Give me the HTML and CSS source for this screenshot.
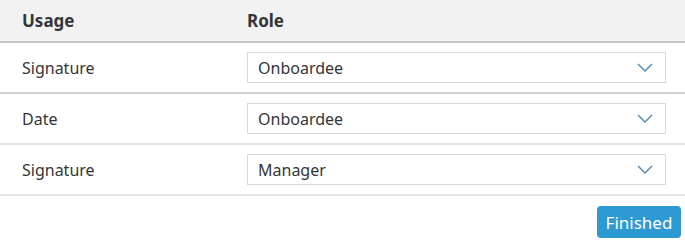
FILE: index.html
```html
<!DOCTYPE html>
<html lang="en">
<head>
    <meta charset="UTF-8">
    <title>Signature Roles</title>
    <link rel="stylesheet" href="styles.css">
</head>
<body>

    <div class="role-table">
        <div class="row head">
            <div class="cell usage">Usage</div>
            <div class="cell">Role</div>
        </div>
        <div class="row first">
            <div class="cell usage">Signature</div>
            <div class="cell">
                <div class="select">
                    <span>Onboardee</span>
                    <svg class="chevron" width="16" height="9" viewBox="0 0 16 9"><path d="M1 1 L8 8 L15 1" fill="none" stroke="#5a8fb8" stroke-width="1.5"/></svg>
                </div>
            </div>
        </div>
        <div class="row">
            <div class="cell usage">Date</div>
            <div class="cell">
                <div class="select">
                    <span>Onboardee</span>
                    <svg class="chevron" width="16" height="9" viewBox="0 0 16 9"><path d="M1 1 L8 8 L15 1" fill="none" stroke="#5a8fb8" stroke-width="1.5"/></svg>
                </div>
            </div>
        </div>
        <div class="row">
            <div class="cell usage">Signature</div>
            <div class="cell">
                <div class="select">
                    <span>Manager</span>
                    <svg class="chevron" width="16" height="9" viewBox="0 0 16 9"><path d="M1 1 L8 8 L15 1" fill="none" stroke="#5a8fb8" stroke-width="1.5"/></svg>
                </div>
            </div>
        </div>
    </div>

    <div class="actions">
        <button class="finish-btn">Finished</button>
    </div>

</body>
</html>
```
FILE: styles.css
```css
body {
    margin: 0;
    font-family: "Noto Sans", sans-serif;
    font-size: 16px;
    color: #32363a;
    background-color: #fff;
}
.row {
    display: grid;
    grid-template-columns: 247px 1fr;
    align-items: center;
    height: 49px;
    border-bottom: 2px solid #e5e5e5;
}
.row.head {
    height: 41px;
    background-color: #f2f2f2;
    border-bottom: 2px solid #c6c6c6;
    font-weight: bold;
    font-size: 17px;
}
.row.first {
    border-bottom-color: #cfcfcf;
}
.cell.usage {
    padding-left: 22px;
}
.select {
    display: flex;
    align-items: center;
    justify-content: space-between;
    width: 419px;
    height: 31px;
    box-sizing: border-box;
    border: 1px solid #d9d9d9;
    padding: 0 12px 0 10px;
    background-color: #fff;
}
.chevron {
    display: block;
}
.actions {
    display: flex;
    justify-content: flex-end;
    padding: 10px 4px 0 0;
}
.finish-btn {
    height: 32px;
    width: 84px;
    border: none;
    border-radius: 4px;
    background-color: #2d9ad4;
    color: #fff;
    font-family: "Noto Sans", sans-serif;
    font-size: 17px;
    padding: 0;
    cursor: pointer;
}
```
